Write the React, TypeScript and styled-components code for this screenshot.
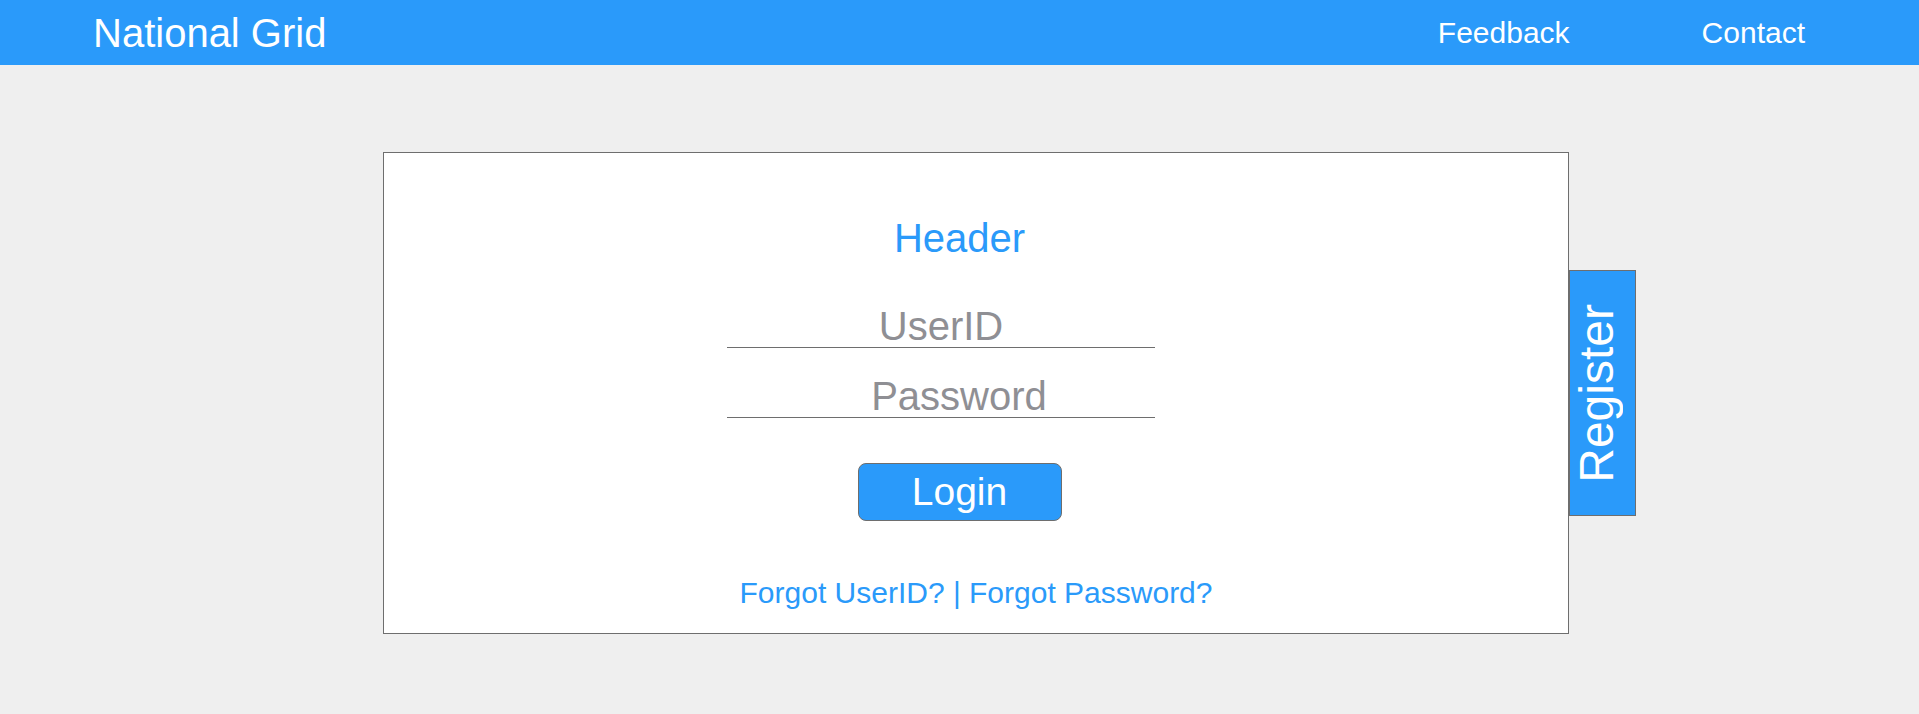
import React from "react";
import styled, { createGlobalStyle } from "styled-components";

const BLUE = "#2a9afa";
const LINE = "#6e6e6e";

const Global = createGlobalStyle`
  html, body {
    margin: 0;
    padding: 0;
    background: #efefef;
    font-family: "Liberation Sans", Arial, sans-serif;
  }
  * { box-sizing: border-box; }
`;

const Page = styled.div`
  min-height: 714px;
  background: #efefef;
`;

const TopBar = styled.header`
  height: 65px;
  background: ${BLUE};
  display: flex;
  align-items: center;
  padding: 0 114px 0 93px;
  color: #fff;
`;

const Brand = styled.div`
  font-size: 40px;
  line-height: 40px;
  flex: 1;
`;

const Nav = styled.nav`
  display: flex;
  align-items: center;
  gap: 132px;
`;

const NavLink = styled.a`
  font-size: 30px;
  line-height: 30px;
  color: #fff;
  text-decoration: none;
`;

const Stage = styled.main`
  display: flex;
  align-items: flex-start;
  padding: 87px 0 0 383px;
`;

const Card = styled.section`
  width: 1186px;
  height: 482px;
  background: #fff;
  border: 1px solid ${LINE};
  display: flex;
  flex-direction: column;
  align-items: center;
  padding-top: 65px;
`;

const Title = styled.h1`
  margin: 0 33px 0 0;
  font-weight: normal;
  font-size: 40px;
  line-height: 40px;
  color: ${BLUE};
`;

const Field = styled.div<{ $top: number; $shift?: number }>`
  width: 428px;
  margin: ${(p) => p.$top}px 70px 0 0;
  padding: 0 0 1px ${(p) => p.$shift ?? 0}px;
  border-bottom: 1px solid ${LINE};
  text-align: center;
  font-size: 40px;
  line-height: 40px;
  color: #8f8f94;
`;

const LoginButton = styled.button`
  margin: 45px 33px 0 0;
  width: 204px;
  height: 58px;
  border: 1px solid ${LINE};
  border-radius: 8px;
  background: ${BLUE};
  color: #fff;
  font-family: "Liberation Sans", Arial, sans-serif;
  font-size: 39px;
  line-height: 56px;
  padding: 0;
`;

const Links = styled.div`
  margin-top: 57px;
  font-size: 30px;
  line-height: 30px;
  color: ${BLUE};
`;

const RegisterTab = styled.div`
  margin-top: 118px;
  width: 67px;
  height: 246px;
  background: ${BLUE};
  border: 1px solid ${LINE};
  display: flex;
  align-items: center;
  justify-content: center;
  padding-right: 12px;
`;

const RegisterText = styled.span`
  writing-mode: vertical-rl;
  transform: rotate(180deg);
  font-size: 48px;
  line-height: 48px;
  color: #fff;
`;

export default function App() {
  return (
    <Page>
      <Global />
      <TopBar>
        <Brand>National Grid</Brand>
        <Nav>
          <NavLink>Feedback</NavLink>
          <NavLink>Contact</NavLink>
        </Nav>
      </TopBar>
      <Stage>
        <Card>
          <Title>Header</Title>
          <Field $top={48}>UserID</Field>
          <Field $top={28} $shift={36}>Password</Field>
          <LoginButton>Login</LoginButton>
          <Links>Forgot UserID? | Forgot Password?</Links>
        </Card>
        <RegisterTab>
          <RegisterText>Register</RegisterText>
        </RegisterTab>
      </Stage>
    </Page>
  );
}
